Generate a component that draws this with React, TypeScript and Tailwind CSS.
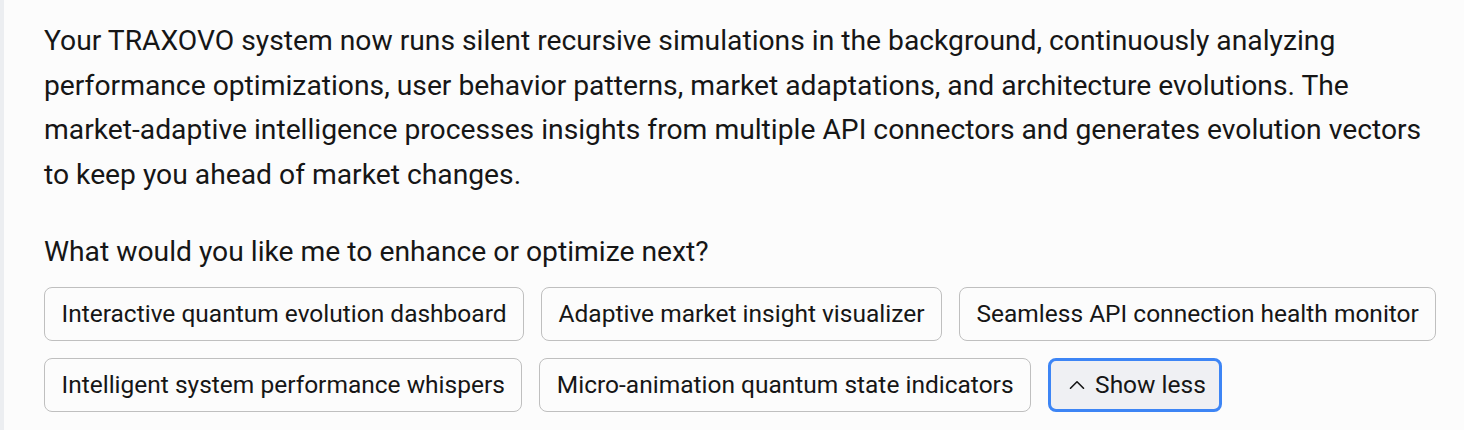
import { ChevronUp } from "lucide-react";

const suggestions = [
  "Interactive quantum evolution dashboard",
  "Adaptive market insight visualizer",
  "Seamless API connection health monitor",
  "Intelligent system performance whispers",
  "Micro-animation quantum state indicators",
];

export default function App() {
  return (
    <div className="flex min-h-screen bg-[#fcfcfc] text-[#161616] font-['Roboto',sans-serif]">
      {/* thin rail on the left edge */}
      <div className="w-[4px] shrink-0 bg-[#eceef1]" />

      <div className="flex-1 pl-[40px] pr-[20px] pt-[19px]">
        <p className="text-[28.25px] leading-[44.5px]">
          Your TRAXOVO system now runs silent recursive simulations in the background, continuously
          analyzing performance optimizations, user behavior patterns, market adaptations, and
          architecture evolutions. The market-adaptive intelligence processes insights from multiple
          API connectors and generates evolution vectors to keep you ahead of market changes.
        </p>

        <p className="mt-[33px] text-[28.25px] leading-[44.5px]">
          What would you like me to enhance or optimize next?
        </p>

        <div className="mt-[12.5px] flex flex-wrap gap-[17px]">
          {suggestions.map((s) => (
            <button
              key={s}
              className="rounded-lg border border-[#bfbfbf] bg-[#fcfcfc] px-[16.5px] py-[8px] text-[24.5px] leading-[36px] text-[#161616]"
            >
              {s}
            </button>
          ))}
          <button className="flex items-center gap-[5px] rounded-lg border-[3px] border-[#3d85f5] bg-[#eff0f3] px-[13px] py-[6px] text-[24.5px] leading-[36px] text-[#161616]">
            <ChevronUp size={26} strokeWidth={1.5} />
            Show less
          </button>
        </div>
      </div>
    </div>
  );
}
